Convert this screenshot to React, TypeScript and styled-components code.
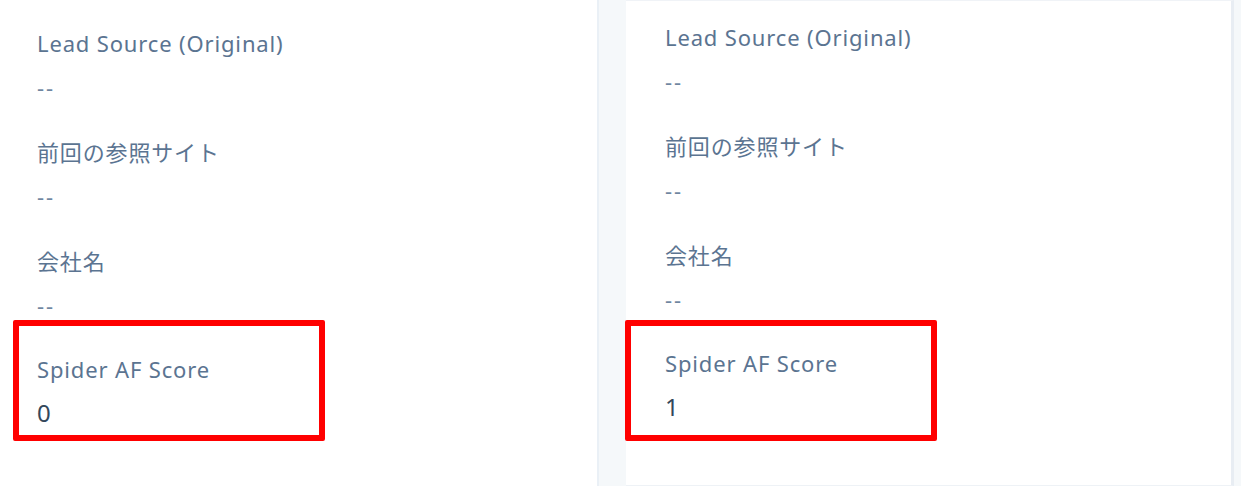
import React from "react";
import styled, { createGlobalStyle } from "styled-components";

const GlobalStyle = createGlobalStyle`
  html, body {
    margin: 0;
    padding: 0;
    background: #ffffff;
  }
  body {
    font-family: "Noto Sans", "Noto Sans CJK JP", sans-serif;
  }
`;

const Page = styled.div`
  position: relative;
  display: flex;
  flex-direction: row;
  align-items: flex-start;
  width: 1246px;
  height: 495px;
  overflow: hidden;
  background: #ffffff;
`;

const Panel = styled.section<{ $offset: number; $framed?: boolean }>`
  box-sizing: border-box;
  display: flex;
  flex-direction: column;
  height: ${({ $framed }) => ($framed ? "486px" : "495px")};
  padding-top: ${({ $offset }) => $offset}px;
  background: #ffffff;
  border-top: ${({ $framed }) => ($framed ? "1px solid #f0f3f7" : "none")};
  border-bottom: ${({ $framed }) => ($framed ? "1px solid #eef2f6" : "none")};
  border-right: ${({ $framed }) => ($framed ? "3px solid #e8edf3" : "none")};
`;

const LeftPanel = styled(Panel)`
  width: 597px;
  padding-left: 37px;
`;

const RightPanel = styled(Panel)`
  width: 608px;
  padding-left: 39px;
`;

/* light grey strip between the two record sidebars */
const Gutter = styled.div<{ $width: number }>`
  box-sizing: border-box;
  width: ${({ $width }) => $width}px;
  height: 486px;
  background: #f5f8fa;
  border-left: 2px solid #eaf0f6;
`;

const EdgeStrip = styled.div`
  width: 7px;
  height: 486px;
  background: #f5f8fa;
`;

const Field = styled.div`
  display: flex;
  flex-direction: column;
  margin-bottom: 37px;

  &:last-child {
    margin-top: -1px;
  }
`;

const Label = styled.div`
  font-size: 22px;
  line-height: 28px;
  letter-spacing: 0.85px;
  color: #5b7491;
  margin-bottom: 16px;
  white-space: nowrap;
`;

const Value = styled.div<{ $empty?: boolean }>`
  font-size: ${({ $empty }) => ($empty ? "22px" : "24px")};
  letter-spacing: ${({ $empty }) => ($empty ? "2px" : "0")};
  line-height: 28px;
  color: ${({ $empty }) => ($empty ? "#6f86a0" : "#33475b")};
  white-space: nowrap;
`;

const Highlight = styled.div<{ $left: number }>`
  position: absolute;
  top: 320px;
  left: ${({ $left }) => $left}px;
  width: 312px;
  height: 121px;
  box-sizing: border-box;
  border: 6px solid #ff0000;
  border-radius: 2px;
  pointer-events: none;
`;

interface FieldData {
  label: string;
  value?: string;
}

const fields = (score: string): FieldData[] => [
  { label: "Lead Source (Original)" },
  { label: "前回の参照サイト" },
  { label: "会社名" },
  { label: "Spider AF Score", value: score },
];

function FieldList({ items }: { items: FieldData[] }) {
  return (
    <>
      {items.map((f) => (
        <Field key={f.label}>
          <Label>{f.label}</Label>
          <Value $empty={!f.value}>{f.value ?? "--"}</Value>
        </Field>
      ))}
    </>
  );
}

export default function App() {
  return (
    <Page>
      <GlobalStyle />
      <LeftPanel $offset={29}>
        <FieldList items={fields("0")} />
      </LeftPanel>
      <Gutter $width={29} />
      <RightPanel $offset={22} $framed>
        <FieldList items={fields("1")} />
      </RightPanel>
      <EdgeStrip />
      <Highlight $left={13} />
      <Highlight $left={625} />
    </Page>
  );
}
